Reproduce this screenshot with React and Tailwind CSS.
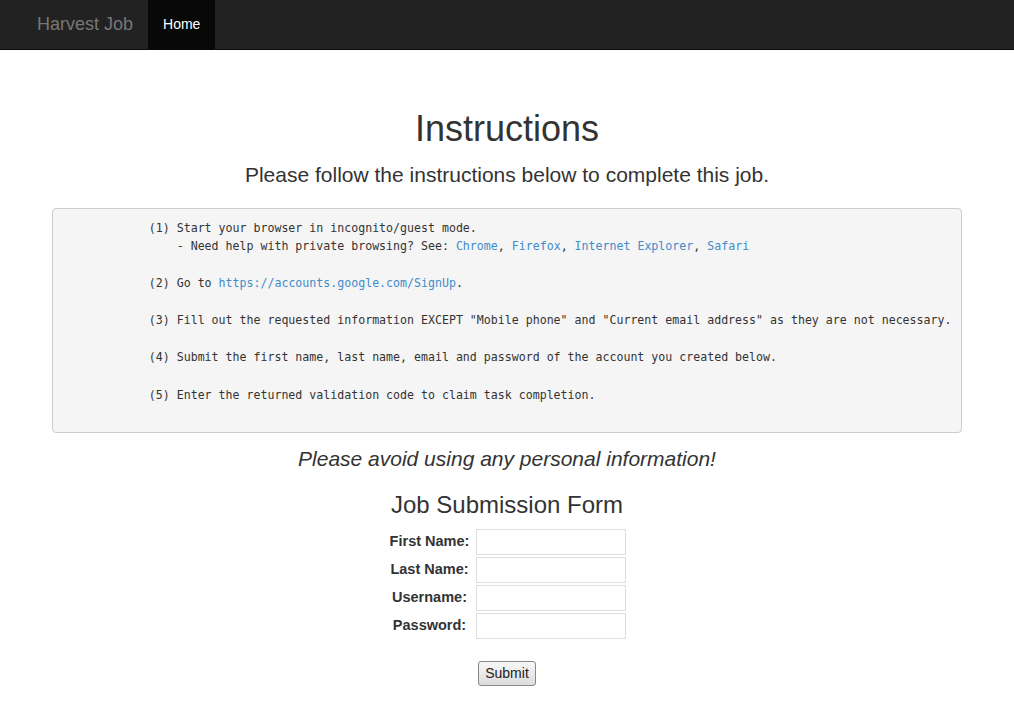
export default function App() {
  const sans = { fontFamily: '"Liberation Sans", Arial, sans-serif' };
  const link = "text-[#428bca]";
  const ind = "            ";
  return (
    <div className="min-h-[711px] bg-white text-[#333]" style={sans}>
      <nav className="h-[50px] bg-[#222] border-b border-[#080808] flex pl-[22px]">
        <div className="px-[15px] flex items-center text-[18px] text-[#777]">Harvest Job</div>
        <div className="px-[15px] flex items-center text-[14px] text-white bg-[#080808]">Home</div>
      </nav>
      <div className="w-[910px] mx-auto">
        <h1 className="text-center text-[36px] leading-[40px] mt-[59px]">Instructions</h1>
        <h4 className="text-center text-[21px] leading-[23px] mt-[13.5px]">Please follow the instructions below to complete this job.</h4>
        <pre
          className="mt-[22.5px] bg-[#f5f5f5] border border-[#ccc] rounded-[4px] py-[9.5px] pl-[12px] pr-[9.5px] text-[11.6px] leading-[18.57px] text-[#333] whitespace-pre"
          style={{ fontFamily: '"DejaVu Sans Mono", monospace' }}
        >
{ind}(1) Start your browser in incognito/guest mode.{"\n"}
{ind}    - Need help with private browsing? See: <span className={link}>Chrome</span>, <span className={link}>Firefox</span>, <span className={link}>Internet Explorer</span>, <span className={link}>Safari</span>{"\n"}
{"\n"}
{ind}(2) Go to <span className={link}>https://accounts.google.com/SignUp</span>.{"\n"}
{"\n"}
{ind}(3) Fill out the requested information EXCEPT "Mobile phone" and "Current email address" as they are not necessary.{"\n"}
{"\n"}
{ind}(4) Submit the first name, last name, email and password of the account you created below.{"\n"}
{"\n"}
{ind}(5) Enter the returned validation code to claim task completion.{"\n"}
{"\n"}
        </pre>
        <p className="text-center italic text-[21px] leading-[23px] mt-[13.5px]">Please avoid using any personal information!</p>
        <h3 className="text-center text-[24px] leading-[26px] mt-[22.5px]">Job Submission Form</h3>
        <form className="flex flex-col items-center mt-[9px]">
          <table className="border-separate border-spacing-[2px]">
            <tbody>
              {["First Name:", "Last Name:", "Username:", "Password:"].map((l) => (
                <tr key={l}>
                  <td className="text-center font-bold text-[14.5px] pl-[2px] pr-[5px]">{l}</td>
                  <td>
                    <input
                      type={l === "Password:" ? "password" : "text"}
                      className="w-[150px] h-[26px] border border-[#ddd] bg-white"
                    />
                  </td>
                </tr>
              ))}
            </tbody>
          </table>
          <button
            type="button"
            className="mt-[19.5px] h-[25px] px-[6px] text-[14px] text-[#222] border border-[#888] rounded-[3px] bg-gradient-to-b from-[#f8f8f8] to-[#dcdcdc]"
          >
            Submit
          </button>
        </form>
      </div>
    </div>
  );
}
